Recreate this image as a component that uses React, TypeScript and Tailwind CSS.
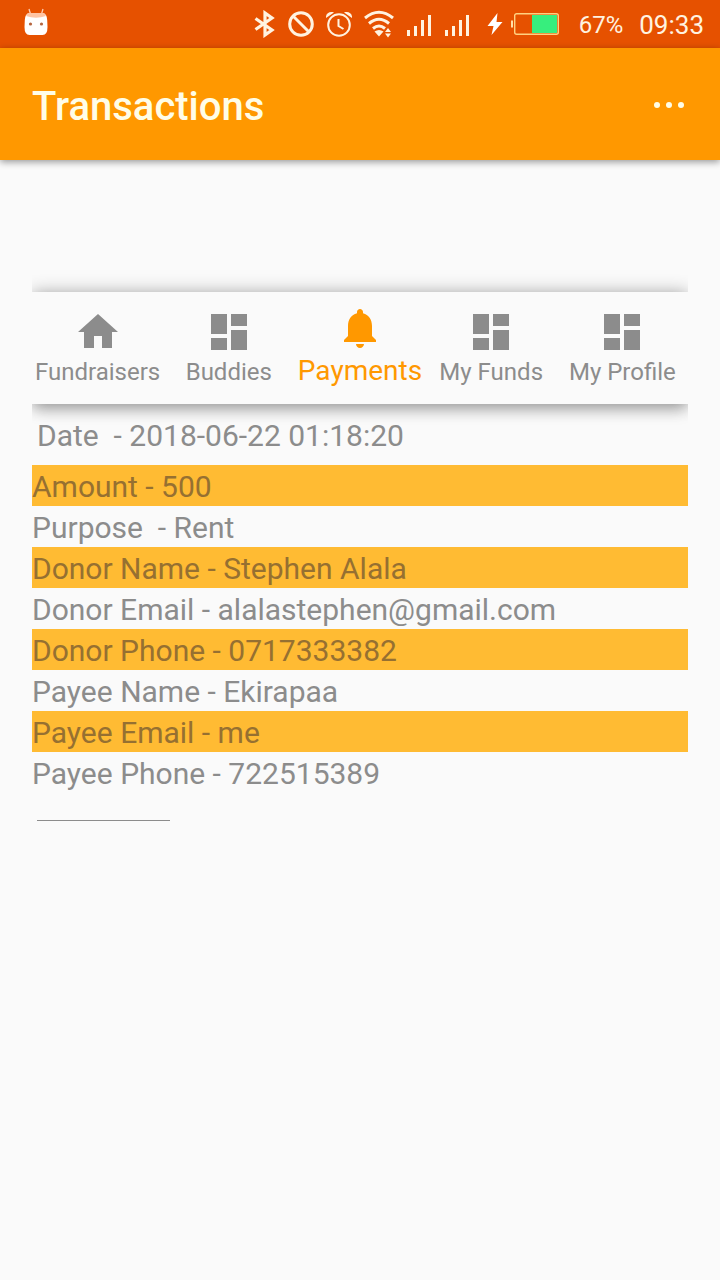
import type { ReactNode } from "react";

type Tab = {
  label: string;
  icon: ReactNode;
  active?: boolean;
};

const HomeIcon = () => (
  <svg viewBox="0 0 24 24" className="h-12 w-12" fill="currentColor" aria-hidden="true">
    <path d="M10 20v-6h4v6h5v-8h3L12 3 2 12h3v8z" />
  </svg>
);

const DashboardIcon = () => (
  <svg viewBox="0 0 24 24" className="h-12 w-12" fill="currentColor" aria-hidden="true">
    <path d="M3 13h8V3H3v10zm0 8h8v-6H3v6zm10 0h8V11h-8v10zm0-18v6h8V3h-8z" />
  </svg>
);

const BellIcon = () => (
  <svg viewBox="0 0 24 24" className="h-12 w-12" fill="currentColor" aria-hidden="true">
    <path d="M12 22c1.1 0 2-.9 2-2h-4c0 1.1.89 2 2 2zM18 16v-5c0-3.07-1.64-5.64-4.5-6.32V4c0-.83-.67-1.5-1.5-1.5s-1.5.67-1.5 1.500v.68C7.63 5.36 6 7.92 6 11v5l-2 2v1h16v-1l-2-2z" />
  </svg>
);

const SignalIcon = () => (
  <svg viewBox="0 0 26 26" className="h-[26px] w-[26px]" fill="currentColor" aria-hidden="true">
    <path d="M1 19h3v6H1zM8 15h3v10H8zM15 9h3v16h-3zM22 4h3v21h-3z" />
  </svg>
);

const tabs: Tab[] = [
  { label: "Fundraisers", icon: <HomeIcon /> },
  { label: "Buddies", icon: <DashboardIcon /> },
  { label: "Payments", icon: <BellIcon />, active: true },
  { label: "My Funds", icon: <DashboardIcon /> },
  { label: "My Profile", icon: <DashboardIcon /> },
];

const details = [
  "Amount - 500",
  "Purpose  - Rent",
  "Donor Name - Stephen Alala",
  "Donor Email - alalastephen@gmail.com",
  "Donor Phone - 0717333382",
  "Payee Name - Ekirapaa",
  "Payee Email - me",
  "Payee Phone - 722515389",
];

function StatusBar() {
  return (
    <div className="flex h-12 items-center bg-[#e65100] pr-4 pl-6 text-[#fff3e0]">
      {/* Notification */}
      <svg viewBox="0 0 24 28" className="mb-1 h-7 w-6" aria-hidden="true">
        <path d="M5 1l1.500 5M19 1l-1.500 5" stroke="#ffccb0" strokeWidth="1.300" fill="none" />
        <path
          d="M5 5h14q4 1 4.200 7l.3 7q0 8-5 8H5.500q-5 0-5-8l.3-7Q1 6 5 5z"
          fill="#fff"
        />
        <path d="M4 5h16l2 3q-10 3.500-20 0z" fill="#ffc4a3" />
        <circle cx="6.500" cy="16" r="1.600" fill="#b5653f" />
        <circle cx="17.500" cy="16" r="1.600" fill="#b5653f" />
      </svg>

      {/* System icons */}
      <div className="ml-auto flex items-center gap-3">
        <svg viewBox="0 0 22 28" className="h-7 w-[22px]" fill="none" stroke="currentColor" strokeWidth="3.200" aria-hidden="true">
          <path d="M1.500 8.500L18 20l-7 5V3l7 5L1.500 19.500" />
        </svg>
        <svg viewBox="0 0 26 26" className="h-[26px] w-[26px]" fill="none" stroke="currentColor" strokeWidth="3" aria-hidden="true">
          <circle cx="13" cy="13" r="11.300" />
          <path d="M5 5l16 16" />
        </svg>
        <svg viewBox="0 0 26 26" className="h-[26px] w-[26px]" fill="none" stroke="currentColor" aria-hidden="true">
          <circle cx="13" cy="14" r="10.800" strokeWidth="2" />
          <path d="M12.500 8v7l5 3" strokeWidth="2" />
          <path d="M0 7C-.5 2 4 0 8 1.500zM26 7c.5-5-4-7-8-5.500z" fill="currentColor" stroke="none" />
        </svg>
        <svg viewBox="0 0 30 28" className="h-7 w-[30px]" fill="none" stroke="currentColor" strokeWidth="3" aria-hidden="true">
          <path d="M1 8q14-11.500 28 0M5 13.500q10-8.500 20 0M9 18.500q6-5 12 0" />
          <path d="M10.500 21.500q4.500-3 9 0L15 26.500z" fill="currentColor" stroke="none" />
          <path d="M21 22l3-4 3 4zM21 23.500l3 4 3-4z" fill="currentColor" stroke="none" />
        </svg>
        <SignalIcon />
        <SignalIcon />
      </div>

      <svg viewBox="0 0 16 24" className="ml-[17px] h-6 w-4" fill="#fff" aria-hidden="true">
        <path d="M10.500 1L.500 14h6l-2 9 11-13H9.500z" />
      </svg>
      <svg viewBox="0 0 48 24" className="ml-2 h-6 w-12" fill="none" aria-hidden="true">
        <path d="M1 8.500v7" stroke="#ffe0a8" strokeWidth="2" />
        <rect x="3.700" y="1.700" width="43.600" height="20.600" rx="2" stroke="#ffd180" strokeWidth="1.400" />
        <path d="M21 3h25v18H21z" fill="#37ee7d" />
      </svg>
      <span className="ml-5 pt-0.5 text-2xl">67%</span>
      <span className="ml-4 pt-0.5 text-[26px]">09:33</span>
    </div>
  );
}

function AppBar() {
  return (
    <header className="flex h-28 items-center justify-between bg-[#ff9800] px-8 pt-0.5 shadow-[0_2px_7px_rgba(0,0,0,0.4)]">
      <h1 className="pt-1 text-[40px] leading-12 font-medium text-[#fffde7]">Transactions</h1>
      <button type="button" aria-label="More options" className="flex gap-1.5 p-1">
        <span className="h-1.5 w-1.5 rounded-full bg-[#fffde7]" />
        <span className="h-1.5 w-1.5 rounded-full bg-[#fffde7]" />
        <span className="h-1.5 w-1.5 rounded-full bg-[#fffde7]" />
      </button>
    </header>
  );
}

function TabBar() {
  return (
    <nav className="grid h-28 grid-cols-5 bg-[#fafafa] shadow-[0_8px_14px_-2px_rgba(0,0,0,0.22),0_0_16px_rgba(0,0,0,0.3)]">
      {tabs.map((tab) => (
        <button
          key={tab.label}
          type="button"
          aria-current={tab.active ? "page" : undefined}
          className={
            tab.active
              ? "flex flex-col items-center pt-3 text-[28px] leading-[38px] whitespace-nowrap text-[#ff9800]"
              : "flex flex-col items-center pt-4 text-2xl leading-8 whitespace-nowrap text-[#8c8c8c]"
          }
        >
          {tab.icon}
          {tab.label}
        </button>
      ))}
    </nav>
  );
}

export default function App() {
  return (
    <div className="min-h-screen bg-[#fafafa] font-[Roboto,sans-serif]">
      <StatusBar />
      <AppBar />
      <main className="px-8 pt-28">
        <section className="overflow-hidden pt-5 pb-8 text-3xl text-[#8c8c8c]">
          <TabBar />
          <p className="px-[5px] pt-3 pb-2.5 leading-[39px] whitespace-pre">{"Date  - 2018-06-22 01:18:20"}</p>
          <ul>
            {details.map((line) => (
              <li key={line} className="pt-0.5 leading-[39px] whitespace-pre odd:bg-[#ffbb33] odd:text-[#967031]">
                {line}
              </li>
            ))}
          </ul>
          <hr className="mt-[27px] ml-[5px] w-[133px] border-[#8c8c8c]" />
        </section>
      </main>
    </div>
  );
}
